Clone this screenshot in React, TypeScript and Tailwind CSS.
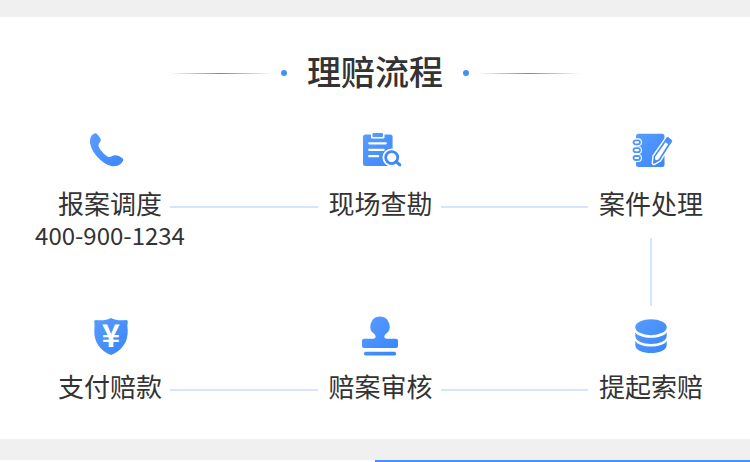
import { Fragment, ReactNode } from "react";

function Icon({ id, children }: { id: string; children: ReactNode }) {
  return (
    <svg viewBox="0 0 40 40" className="h-10 w-10 overflow-visible" fill={`url(#${id})`} aria-hidden="true">
      <defs>
        <linearGradient id={id} gradientUnits="userSpaceOnUse" x1="0" y1="0" x2="40" y2="40">
          <stop offset="0" stopColor="#5c9dff" />
          <stop offset="1" stopColor="#3584f8" />
        </linearGradient>
      </defs>
      {children}
    </svg>
  );
}

function PhoneIcon() {
  return (
    <Icon id="phone">
      <path d="M3.4 .9C5 0 6.3 .1 7.4 1.4C9 3.1 10.3 4.9 10.8 6.6C11.3 8.5 8.6 10.2 8.4 12.2C8.3 15.2 14.9 22.8 18.5 24C20.7 24.6 22.3 22.2 25 22.2C27.8 22.2 31.2 24 32.8 25.6C33.9 26.9 33 28.5 31.5 30C28.6 33 24.6 34.1 20.5 32.8C11 29.6 2.6 20.6 .3 11.2C-.6 7 .5 2.8 3.4 .9Z" />
    </Icon>
  );
}

function SurveyIcon() {
  return (
    <Icon id="survey">
      <rect x="2" y="1.6" width="29.6" height="31.4" rx="2.5" />
      <rect x="10" y="-1" width="13.5" height="6.6" rx="1" fill="#fff" />
      <rect x="11.5" y="0" width="10.5" height="4" rx="1" />
      <path d="M8.2 10.3h16.6M8.2 16.8h14.5M8.2 23.2h9" stroke="#fff" strokeWidth="2.2" strokeLinecap="round" />
      <circle cx="30.7" cy="24.6" r="9.2" fill="#fff" />
      <path d="M34 28l5 4.5" stroke="#fff" strokeWidth="5" />
      <circle cx="30.7" cy="24.6" r="6" fill="#fff" stroke="#4089f9" strokeWidth="2.8" />
      <path d="M35.2 28.6l3.6 3.3" stroke="#3d88f9" strokeWidth="3" strokeLinecap="round" />
    </Icon>
  );
}

function NotebookIcon() {
  return (
    <Icon id="notebook">
      <rect x="5" y=".8" width="28.5" height="33.2" rx="2.5" />
      {[9.3, 17.2, 25].map((y) => (
        <g key={y}>
          <rect x="2.5" y={y - 2} width="6.5" height="4" rx="2" fill="#fff" stroke="#fff" strokeWidth="4" />
          <rect x="2.5" y={y - 2} width="6.5" height="4" rx="2" fill="#fff" stroke="#5095fd" strokeWidth="1.8" />
        </g>
      ))}
      <path d="M36.6 4.8L40.4 7.8L28.4 26.8L22.8 30L23.4 23.6Z" stroke="#fff" strokeWidth="4.4" strokeLinejoin="round" fill="#fff" />
      <path d="M36.6 4.8L40.4 7.8L28.4 26.8L22.8 30L23.4 23.6Z" stroke="#4289f9" strokeWidth="1.6" strokeLinejoin="round" fill="#fff" />
      <path d="M36.6 4.8L40.4 7.8L38.4 11L34.4 8.2Z" fill="#4b91fc" stroke="#4b91fc" strokeWidth="1.6" strokeLinejoin="round" />
      <path d="M23.2 25.8L26.6 28L22.8 30Z" fill="#4289f9" />
    </Icon>
  );
}

function PaymentIcon() {
  return (
    <Icon id="payment">
      <path d="M21 2C25 4.3 31 4.8 36.3 3.9Q37.8 4 37.8 6C37.2 9 37.4 11 37.7 14C38.3 26 32 34.5 21 39C10 34.5 3.7 26 4.3 14C4.6 11 4.8 9 4.2 6Q4.2 4 5.7 3.9C11 4.8 17 4.3 21 2Z" />
      <text x="21" y="31" textAnchor="middle" fill="#fff" className="font-['Noto_Sans_CJK_SC',sans-serif] text-[31px] font-bold">
        ¥
      </text>
    </Icon>
  );
}

function StampIcon() {
  return (
    <Icon id="stamp">
      <path d="M19 .5A9.8 9.8 0 0 1 24.5 18.3C23 19.5 22.7 22.5 25.5 22.7H35Q37 22.7 37 24.7V30Q37 32 35 32H3Q1 32 1 30V24.7Q1 22.7 3 22.7H12.5C15.3 22.5 15 19.5 13.5 18.3A9.8 9.8 0 0 1 19 .5Z" />
      <rect x="3" y="35.8" width="32" height="3.6" rx="1.5" />
    </Icon>
  );
}

function CoinsIcon() {
  return (
    <Icon id="coins">
      <ellipse cx="20" cy="11.2" rx="15.7" ry="8" />
      <path d="M4.3 16.3C8 23.6 32 23.6 35.7 16.3V20C35.7 30.6 4.3 30.6 4.3 20Z" />
      <path d="M4.3 25C8 32.3 32 32.3 35.7 25V29C35.7 39.8 4.3 39.8 4.3 29Z" />
    </Icon>
  );
}

type Step = { title: string; icon: ReactNode; phone?: string; down?: boolean };

const rows: Step[][] = [
  [
    { title: "报案调度", icon: <PhoneIcon />, phone: "400-900-1234" },
    { title: "现场查勘", icon: <SurveyIcon /> },
    { title: "案件处理", icon: <NotebookIcon />, down: true },
  ],
  [
    { title: "支付赔款", icon: <PaymentIcon /> },
    { title: "赔案审核", icon: <StampIcon /> },
    { title: "提起索赔", icon: <CoinsIcon /> },
  ],
];

function StepItem({ step }: { step: Step }) {
  return (
    <div className="flex w-[104px] shrink-0 flex-col items-center whitespace-nowrap">
      {step.icon}
      <h3 className="mt-3.5 text-[26px] leading-8">{step.title}</h3>
      {step.phone && <p className="text-2xl leading-8">{step.phone}</p>}
      {step.down && <div className="mt-[19px] h-[68px] w-0.5 bg-[#d6e5ff]" />}
    </div>
  );
}

function TitleLine() {
  return <div className="h-px w-[104px] bg-linear-to-r from-[#4a90fc]/0 via-[#4a90fc] to-[#4a90fc]/0" />;
}

function TitleDot() {
  return <div className="h-1.5 w-1.5 rounded-full bg-[#4390fc]" />;
}

export default function App() {
  return (
    <div className="bg-[#f0f0f0] pt-[17px] font-['Noto_Sans_CJK_SC',sans-serif] text-[#333]">
      <section className="bg-white pt-9 pb-[37px]">
        <div className="flex items-center justify-center gap-2">
          <TitleLine />
          <TitleDot />
          <h2 className="mx-3 pb-1 text-[34px] leading-9 font-medium">理赔流程</h2>
          <TitleDot />
          <TitleLine />
        </div>
        <div className="mt-10 flex flex-col gap-2.5 pr-[47px] pl-[58px]">
          {rows.map((row, i) => (
            <div key={i} className="flex items-start">
              {row.map((step, j) => (
                <Fragment key={step.title}>
                  {j > 0 && <div className="mt-[73px] mr-[11px] ml-2 h-0.5 flex-1 bg-[#d6e5ff]" />}
                  <StepItem step={step} />
                </Fragment>
              ))}
            </div>
          ))}
        </div>
      </section>
      <div className="mt-[21px] grid h-0.5 grid-cols-2">
        <div className="bg-white" />
        <div className="bg-[#4a8ffb]" />
      </div>
    </div>
  );
}
